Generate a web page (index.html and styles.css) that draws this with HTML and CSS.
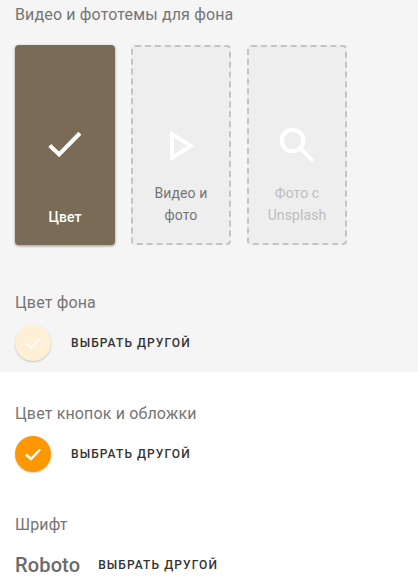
FILE: index.html
```html
<!DOCTYPE html>
<html lang="ru">
<head>
<meta charset="utf-8">
<title>Фон</title>
<link rel="stylesheet" href="styles.css">
</head>
<body>
<section class="grey">
  <h2 class="label first">Видео и фототемы для фона</h2>
  <div class="cards">
    <div class="card solid">
      <svg class="ico" viewBox="0 0 40 40"><path d="M3 20.5 L13.5 30.5 L36.5 7" fill="none" stroke="#fff" stroke-width="4.6"/></svg>
      <div class="cap">Цвет</div>
    </div>
    <div class="card dashed">
      <svg class="ico" viewBox="0 0 40 40"><path d="M10 8 L31 21 L10 34 Z" fill="none" stroke="#fff" stroke-width="4.4"/></svg>
      <div class="cap">Видео и<br>фото</div>
    </div>
    <div class="card dashed off">
      <svg class="ico" viewBox="0 0 40 40"><circle cx="15" cy="15" r="12" fill="none" stroke="#fff" stroke-width="4.6"/><path d="M24 24 L38 38" stroke="#fff" stroke-width="4.6" fill="none"/></svg>
      <div class="cap">Фото с<br>Unsplash</div>
    </div>
  </div>
  <h2 class="label bg">Цвет фона</h2>
  <div class="row">
    <span class="dot pale"><svg viewBox="0 0 24 24"><path d="M5 12.5 L10 17 L19 7.5" fill="none" stroke="#fff" stroke-opacity=".8" stroke-width="2.4"/></svg></span>
    <span class="btn">Выбрать другой</span>
  </div>
</section>
<section class="white">
  <h2 class="label">Цвет кнопок и обложки</h2>
  <div class="row">
    <span class="dot orange"><svg viewBox="0 0 24 24"><path d="M5 12.5 L10 17 L19 7.5" fill="none" stroke="#fff" stroke-width="2.4"/></svg></span>
    <span class="btn">Выбрать другой</span>
  </div>
  <h2 class="label font">Шрифт</h2>
  <div class="fontrow">
    <span class="fname">Roboto</span>
    <span class="btn">Выбрать другой</span>
  </div>
</section>
</body>
</html>
```
FILE: styles.css
```css
* { box-sizing: border-box; }
html, body { margin: 0; padding: 0; }
body {
  width: 418px;
  height: 584px;
  overflow: hidden;
  background: #fff;
  font-family: Roboto, sans-serif;
}
.grey {
  background: #f5f5f5;
  height: 372px;
  padding: 5px 15px 0;
}
.white { padding: 32px 15px 0; }
.label {
  margin: 0;
  font-size: 16px;
  line-height: 20px;
  font-weight: 400;
  letter-spacing: .15px;
  color: #757575;
}
.cards {
  display: flex;
  gap: 16px;
  margin-top: 20px;
}
.card {
  width: 100px;
  height: 200px;
  border-radius: 4px;
  display: flex;
  flex-direction: column;
  align-items: center;
  padding-top: 82px;
}
.solid {
  background: #7a6b56;
  box-shadow: 0 1px 3px rgba(0,0,0,.4);
}
.dashed {
  background: #eee;
  border: 2px dashed #c4c4c4;
  padding-top: 80px;
}
.ico { width: 36px; height: 36px; flex: none; }
.cap {
  margin-top: 19px;
  text-align: center;
  font-size: 14px;
  line-height: 22px;
  letter-spacing: .1px;
  color: #757575;
}
.solid .cap { margin-top: 43px; color: #fff; font-weight: 500; }
.off .cap { color: #bdbdbd; }
.bg { margin-top: 48px; }
.row {
  display: flex;
  align-items: center;
  gap: 20px;
  margin-top: 12px;
  height: 36px;
}
.dot {
  width: 36px;
  height: 36px;
  border-radius: 50%;
  display: flex;
  align-items: center;
  justify-content: center;
  box-shadow: 0 1px 2px rgba(0,0,0,.2);
}
.dot svg { width: 24px; height: 24px; }
.pale { background: #ffefd5; }
.orange { background: #ff9800; }
.btn {
  font-size: 12px;
  line-height: 16px;
  font-weight: 500;
  letter-spacing: 1.08px;
  text-transform: uppercase;
  color: #333;
}
.font { margin-top: 43px; }
.fontrow {
  display: flex;
  align-items: center;
  gap: 18px;
  margin-top: 18px;
  height: 24px;
}
.fname {
  font-size: 20px;
  font-weight: 500;
  letter-spacing: .15px;
  color: #6b6b6b;
}
```
